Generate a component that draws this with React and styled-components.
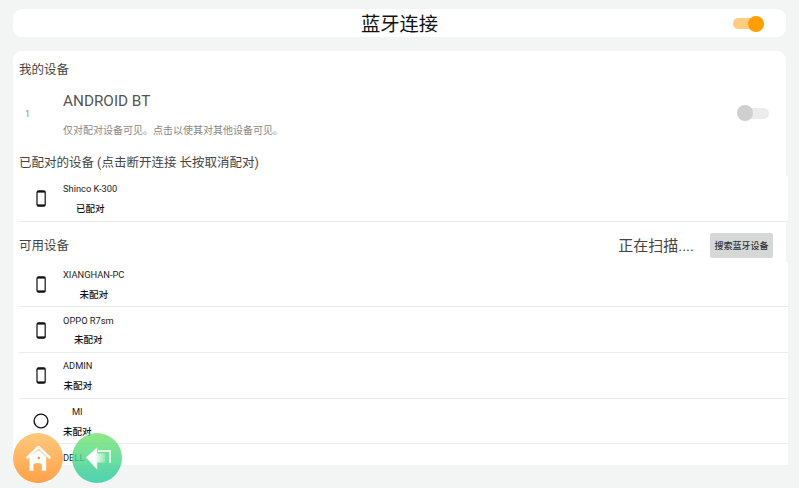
import React from 'react'
import styled, { createGlobalStyle } from 'styled-components'

const paired = [{ name: 'Shinco K-300', status: '已配对', kind: 'phone' }]

const available = [
    { name: 'XIANGHAN-PC', status: '未配对', kind: 'phone' },
    { name: 'OPPO R7sm', status: '未配对', kind: 'phone' },
    { name: 'ADMIN', status: '未配对', kind: 'phone' },
    { name: 'MI', status: '未配对', kind: 'round' },
    { name: 'DELL', kind: 'none' },
]

function PhoneIcon() {
    return (
        <svg width="12" height="17" viewBox="0 0 12 17" fill="none">
            <rect x="2" y="0.9" width="8.2" height="15.2" rx="1.6" stroke="#111" strokeWidth="1.2" />
            <rect x="2" y="0.9" width="8.2" height="1.7" fill="#111" />
            <rect x="2" y="14.4" width="8.2" height="1.7" fill="#111" />
        </svg>
    )
}

function RoundIcon() {
    return (
        <svg width="16" height="16" viewBox="0 0 16 16" fill="none">
            <circle cx="8" cy="8" r="6.9" stroke="#111" strokeWidth="1.4" />
        </svg>
    )
}

function HomeIcon() {
    return (
        <svg width="50" height="50" viewBox="0 0 50 50">
            <path d="M14.5 24.5 L25.5 14 L36.5 24.5" fill="none" stroke="#fff" strokeWidth="2.6" strokeLinecap="round" strokeLinejoin="round" />
            <path d="M16.5 24 L25.5 17 L33.2 24 V37.7 H28.8 V32 Q28.8 30 24.6 30 Q20.4 30 20.4 32 V37.7 H16.5 Z" fill="#fff" />
            <circle cx="25.8" cy="25" r="1.2" fill="#f59a3c" />
        </svg>
    )
}

function BackIcon() {
    return (
        <svg width="50" height="50" viewBox="0 0 50 50">
            <defs>
                <linearGradient id="shaftFade" x1="0" x2="1" y1="0" y2="0">
                    <stop offset="0.45" stopColor="#fff" />
                    <stop offset="1" stopColor="#fff" stopOpacity="0.2" />
                </linearGradient>
            </defs>
            <path d="M26 18 H38 V30" fill="none" stroke="#fff" strokeOpacity="0.8" strokeWidth="2" />
            <path d="M14 24.5 L25.3 14.3 V20.5 H33.5 V29.5 H25.3 V36.7 Z" fill="url(#shaftFade)" />
        </svg>
    )
}

function DeviceRow({ name, status, kind }) {
    return (
        <Row>
            <IconCell>
                {kind === 'phone' && <PhoneIcon />}
                {kind === 'round' && <RoundIcon />}
            </IconCell>
            <Labels>
                <span>{name}</span>
                {status && <Status>{status}</Status>}
            </Labels>
        </Row>
    )
}

export default function App() {
    return (
        <Page>
            <GlobalStyle />
            <Header>
                <Title>蓝牙连接</Title>
                <HeaderSwitch>
                    <Switch $on>
                        <Knob $on />
                    </Switch>
                </HeaderSwitch>
            </Header>
            <Panel>
                <SectionTitle $height={24} $pad={2}>我的设备</SectionTitle>
                <MyDevice>
                    <Index>1</Index>
                    <MyText>
                        <MyName>ANDROID BT</MyName>
                        <MyHint>仅对配对设备可见。点击以使其对其他设备可见。</MyHint>
                    </MyText>
                    <Switch>
                        <Knob />
                    </Switch>
                </MyDevice>
                <SectionTitle $height={26} $pad={4}>已配对的设备 (点击断开连接 长按取消配对)</SectionTitle>
                <List>
                    {paired.map(d => <DeviceRow key={d.name} {...d} />)}
                </List>
                <ScanBar>
                    <SectionTitle $pad={3}>可用设备</SectionTitle>
                    <Scanning>正在扫描....</Scanning>
                    <SearchButton>搜索蓝牙设备</SearchButton>
                </ScanBar>
                <List>
                    {available.map(d => <DeviceRow key={d.name} {...d} />)}
                </List>
            </Panel>
            <FloatBtn $left={13} $from="#ffc97c" $to="#ffa149"><HomeIcon /></FloatBtn>
            <FloatBtn $left={72} $from="#72e56a" $to="#26c9a4" $see><BackIcon /></FloatBtn>
        </Page>
    )
}

const GlobalStyle = createGlobalStyle`
    html, body {
        margin: 0;
        padding: 0;
        background: #f3f5f4;
    }
    * {
        box-sizing: border-box;
    }
`

const Page = styled.div`
    position: relative;
    width: 799px;
    height: 488px;
    padding: 9px 13px 0;
    overflow: hidden;
    font-family: Roboto, "Noto Sans CJK SC", sans-serif;
    color: #333;
`

const Header = styled.div`
    position: relative;
    height: 28px;
    display: flex;
    align-items: center;
    justify-content: center;
    background: #fff;
    border-radius: 9px;
`

const HeaderSwitch = styled.div`
    position: absolute;
    right: 23px;
    top: 9px;
`

const Title = styled.div`
    font-size: 19.3px;
    padding-bottom: 1px;
    color: #111;
`

const Panel = styled.div`
    height: 414px;
    margin-top: 14px;
    padding: 6px 0 0 6px;
    background: #fff;
    border-radius: 9px;
    overflow-y: clip;
`

const SectionTitle = styled.div`
    display: flex;
    align-items: center;
    height: ${props => (props.$height ? `${props.$height}px` : 'auto')};
    padding-bottom: ${props => props.$pad || 0}px;
    font-size: 12.5px;
    color: #444;
`

const MyDevice = styled.div`
    display: flex;
    align-items: center;
    height: 69px;
    padding: 0 17px 5px 0;
`

const Index = styled.div`
    width: 44px;
    padding: 1px 0 0 6px;
    font-size: 9px;
    color: #888;
`

const MyText = styled.div`
    flex: 1;
    align-self: flex-start;
    padding-top: 10px;
`

const MyName = styled.div`
    font-size: 15.3px;
    line-height: 20px;
    color: #555;
`

const MyHint = styled.div`
    margin-top: 10px;
    font-size: 10px;
    line-height: 20px;
    color: #888;
`

const Switch = styled.div`
    position: relative;
    width: ${props => (props.$on ? '30px' : '24px')};
    height: 11px;
    border-radius: 6px;
    background: ${props => (props.$on ? '#ffcc80' : '#ececec')};
`

const Knob = styled.div`
    position: absolute;
    top: -2.5px;
    ${props => (props.$on ? 'right: -0.5px;' : 'left: -8px;')}
    width: 16px;
    height: 16px;
    border-radius: 50%;
    background: ${props => (props.$on ? '#ff9e00' : '#cfcfcf')};
`

const List = styled.div`
    margin-right: -2px;
    background: #fff;
`

const Row = styled.div`
    display: flex;
    height: 45.6px;
    border-bottom: 1px solid #ececec;
`

const IconCell = styled.div`
    width: 44px;
    display: flex;
    align-items: center;
    justify-content: center;
    padding-top: 1px;
`

const Labels = styled.div`
    display: inline-flex;
    flex-direction: column;
    align-items: center;
    align-self: flex-start;
    padding-top: 3.4px;
    font-size: 9.3px;
    line-height: 19.5px;
    color: #222;
`

const Status = styled.span`
    font-size: 9.5px;
    font-weight: 500;
    color: #111;
`

const ScanBar = styled.div`
    display: flex;
    align-items: center;
    height: 40.3px;
    padding: 8px 13px 0 0;
`

const Scanning = styled.div`
    margin-left: auto;
    padding-bottom: 2px;
    font-size: 15px;
    color: #444;
`

const SearchButton = styled.button`
    width: 63px;
    height: 25px;
    margin-left: 16px;
    padding: 0;
    border: none;
    border-radius: 2px;
    background: #d6d7d7;
    font-family: inherit;
    font-size: 9px;
    font-weight: 500;
    color: #333;
`

const FloatBtn = styled.div`
    position: absolute;
    left: ${props => props.$left}px;
    top: 433px;
    width: 50px;
    height: 50px;
    border-radius: 50%;
    opacity: ${props => (props.$see ? 0.8 : 1)};
    background: linear-gradient(${props => props.$from}, ${props => props.$to});

    & svg {
        display: block;
    }
`
